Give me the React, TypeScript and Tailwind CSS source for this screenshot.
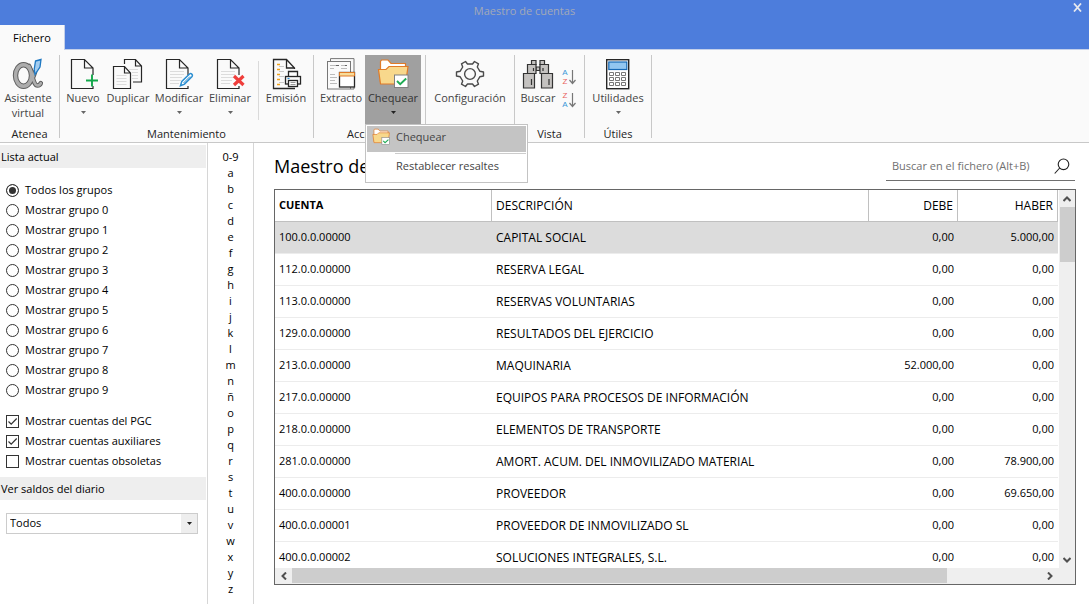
import { useState, type ReactNode } from "react";

const groups = [
  "Todos los grupos",
  ...Array.from({ length: 10 }, (_, i) => `Mostrar grupo ${i}`),
];

const initialOptions = [
  { label: "Mostrar cuentas del PGC", on: true },
  { label: "Mostrar cuentas auxiliares", on: true },
  { label: "Mostrar cuentas obsoletas", on: false },
];

const letters = ["0-9", ..."abcdefghijklmnñopqrstuvwxyz"];

const rows = [
  ["100.0.0.00000", "CAPITAL SOCIAL", "0,00", "5.000,00"],
  ["112.0.0.00000", "RESERVA LEGAL", "0,00", "0,00"],
  ["113.0.0.00000", "RESERVAS VOLUNTARIAS", "0,00", "0,00"],
  ["129.0.0.00000", "RESULTADOS DEL EJERCICIO", "0,00", "0,00"],
  ["213.0.0.00000", "MAQUINARIA", "52.000,00", "0,00"],
  ["217.0.0.00000", "EQUIPOS PARA PROCESOS DE INFORMACIÓN", "0,00", "0,00"],
  ["218.0.0.00000", "ELEMENTOS DE TRANSPORTE", "0,00", "0,00"],
  ["281.0.0.00000", "AMORT. ACUM. DEL INMOVILIZADO MATERIAL", "0,00", "78.900,00"],
  ["400.0.0.00000", "PROVEEDOR", "0,00", "69.650,00"],
  ["400.0.0.00001", "PROVEEDOR DE INMOVILIZADO SL", "0,00", "0,00"],
  ["400.0.0.00002", "SOLUCIONES INTEGRALES, S.L.", "0,00", "0,00"],
];

function Icon({ children }: { children: ReactNode }) {
  return (
    <svg viewBox="0 0 32 32" className="size-8 shrink-0" fill="none" aria-hidden="true">
      {children}
    </svg>
  );
}

function AssistantIcon() {
  const ribbon = "M17 8c3 5 4 19.500 8.500 19.500 2 0 2.800-1 3.300-2.300M23 14c-1.500 5-4 10-7 12.500";
  return (
    <Icon>
      <g strokeLinecap="round">
        <ellipse cx="11.500" cy="17.500" rx="8" ry="10.800" stroke="#5f5f5f" strokeWidth="5.400" />
        <path d={ribbon} stroke="#5f5f5f" strokeWidth="4.600" />
        <ellipse cx="11.500" cy="17.500" rx="8" ry="10.800" stroke="#adadad" strokeWidth="3.400" />
        <path d={ribbon} stroke="#adadad" strokeWidth="2.600" />
      </g>
      <path d="M23.500 3 29 1.500l-1 7.500-5 7.500-.8-5Z" fill="#a3cdf0" stroke="#1e78c2" strokeWidth="1.300" />
    </Icon>
  );
}

function Page() {
  return <path d="M25 17V10L16.500 1.500H3.500v29H25V28M16.500 1.500V10H25" stroke="#262626" strokeWidth="1.200" />;
}

function PageLines() {
  return <path d="M7 13.500h14M7 16.500h14M7 19.500h12M7 22.500h11M7 25.500h9" stroke="#dcdcdc" />;
}

function NewIcon() {
  return (
    <Icon>
      <path d="M26 17V10L17.500 1.500H4.500v29H26V28M17.500 1.500V10H26" stroke="#262626" strokeWidth="1.200" />
      <path d="M19 22.500h12M25 16.500v12" stroke="#12a84b" strokeWidth="1.900" />
    </Icon>
  );
}

function DuplicateIcon() {
  return (
    <Icon>
      <path d="M12.500 6V1.500h11L29.500 8v16H21M23.500 1.500V8h6" stroke="#262626" strokeWidth="1.200" />
      <path d="M17 11.500h9M20 14.500h6M20 17.500h6M20 20.500h6" stroke="#dcdcdc" />
      <path d="M1.500 8.500h11l6 6.500v15.500h-17ZM12.500 8.500V15h6" stroke="#262626" strokeWidth="1.200" />
      <path d="M4.500 17.500h10M4.500 20.500h10M4.500 23.500h10M4.500 26.500h10" stroke="#dcdcdc" />
    </Icon>
  );
}

function EditIcon() {
  return (
    <Icon>
      <Page />
      <PageLines />
      <path
        d="m17.500 27.700 1.300-4.300 7.700-7.400c1.500-1.200 3.800.8 2.600 2.500l-7.600 7.600-4 1.600Z"
        fill="#fff"
        stroke="#2a8dd0"
        strokeWidth="1.500"
      />
      <path d="m20.500 25 6.500-6.500" stroke="#2a8dd0" />
    </Icon>
  );
}

function DeleteIcon() {
  return (
    <Icon>
      <Page />
      <PageLines />
      <path d="m20 18 9.500 9M29.500 18 20 27" stroke="#ef3e3b" strokeWidth="3.200" />
    </Icon>
  );
}

function PrintIcon() {
  return (
    <Icon>
      <path d="M24.500 11V10L16.500 1.500h-13v29H25M16.500 1.500V10h8" stroke="#262626" strokeWidth="1.300" />
      <path d="M7 6.500h3M7 11.500h3M7 16.500h3M7 21.500h3M7 26.500h3" stroke="#f0a21c" strokeWidth="1.500" />
      <path d="M9 8.500h5M9 13.500h5M9 18.500h5M9 24.500h5" stroke="#c8c8c8" />
      <path d="M18.500 18.500v-5h9v5" fill="#fff" stroke="#262626" strokeWidth="1.300" />
      <rect x="15.500" y="18.500" width="15" height="7.500" fill="#fafafa" stroke="#262626" strokeWidth="1.300" />
      <rect x="18.500" y="22.500" width="9" height="6" fill="#fff" stroke="#262626" strokeWidth="1.300" />
      <path d="M20.500 24.500h5M20.500 26.500h5" stroke="#999" />
      <path d="M17.500 20.500h2" stroke="#2a8dd0" strokeWidth="1.200" />
    </Icon>
  );
}

function StatementIcon() {
  return (
    <Icon>
      <path d="M5.500 3V.6h23.500V14M29 29v2h-3" stroke="#777" />
      <rect x="2.500" y="3.500" width="23" height="27.500" fill="#fafafa" stroke="#777" />
      <path d="M5 7.500h8M16 7.500h6M5 10.500h4M16 10.500h6M5 16.500h5M5 19.500h7M5 22.500h5M5 25.500h7" stroke="#bbb" />
      <path d="M11 7.500h3M20 7.500h2" stroke="#666" />
      <rect x="14.500" y="14.500" width="15" height="14.500" fill="#fff" stroke="#262626" strokeWidth="1.300" />
      <path d="M14.500 14.500h15v3.500h-15Z" fill="#f8dc9a" stroke="#e07b28" />
    </Icon>
  );
}

function FolderCheckArt() {
  return (
    <>
      <path d="M3.500 24V3.500l1-1.500H11l3 3.500h14.500V12" fill="#fff" stroke="#e07b28" strokeWidth="1.200" />
      <path d="M3.500 26 1.500 11.500h7.500l3-3H31L28.500 26Z" fill="#f8d88c" stroke="#e07b28" strokeWidth="1.200" />
      <rect x="17.500" y="17" width="13.500" height="12.500" fill="#fff" stroke="#808080" />
      <path d="m20 23 3.200 3.200 6-5.700" stroke="#1fab54" strokeWidth="1.900" />
    </>
  );
}

function GearIcon() {
  return (
    <Icon>
      <path
        d="M11.500 3.500 13.500 6h5l2-2.500 4 2.300-1.200 3.200 2.500 4.200 3.700.8v4l-3.700.8-2.500 4.200 1.200 3.200-4 2.300-2-2.500h-5l-2 2.500-4-2.300 1.200-3.200-2.500-4.200-3.700-.8v-4l3.700-.8L8.700 9 7.500 5.800Z"
        stroke="#4a4a4a"
        strokeWidth="1.400"
        strokeLinejoin="round"
      />
      <circle cx="16" cy="16" r="5.400" stroke="#4a4a4a" strokeWidth="1.400" />
    </Icon>
  );
}

function BinocularsIcon() {
  return (
    <Icon>
      <g fill="#c4c2c0" stroke="#333" strokeWidth="1.200">
        <path d="M9.500 2.500h4.500v4H9.500ZM18 2.500h4.500v4H18ZM14 9h4v3.500h-4Z" />
        <path d="M5.500 6.500H14v9H5.500ZM18 6.500h8.500v9H18Z" />
        <path d="M1.500 15.500h11v14.500h-11ZM19.500 15.500h11v14.500h-11Z" />
      </g>
      <path d="M11.500 10v3M21 10v3M9.500 21v6M27 21v6" stroke="#333" strokeWidth="1.200" />
    </Icon>
  );
}

function CalculatorIcon() {
  return (
    <Icon>
      <rect x="4.700" y="1.700" width="22" height="29" fill="#fff" stroke="#262626" strokeWidth="1.400" />
      <rect x="6.800" y="4" width="18" height="7.500" fill="#92c6f0" stroke="#1769b5" strokeWidth="1.200" />
      <path
        d="M7.500 14.500h4v3h-4ZM13.500 14.500h4v3h-4ZM19.500 14.500h4v3h-4ZM7.500 19.500h4v3h-4ZM13.500 19.500h4v3h-4ZM19.500 19.500h4v3h-4ZM7.500 24.500h4v3h-4ZM13.500 24.500h4v3h-4ZM19.500 24.500h4v3h-4Z"
        fill="#fff"
        stroke="#777"
      />
    </Icon>
  );
}

function SortIcon({ top, bottom, topFill, bottomFill }: { top: string; bottom: string; topFill: string; bottomFill: string }) {
  return (
    <svg viewBox="0 0 16 20" className="h-5 w-4" fill="none" aria-hidden="true">
      <g fontFamily="Liberation Sans, sans-serif" fontSize="8" textAnchor="middle">
        <text x="4" y="8" fill={topFill}>{top}</text>
        <text x="4" y="17" fill={bottomFill}>{bottom}</text>
      </g>
      <path d="M11.500 3v13.500M8.500 13l3 3.500 3-3.500" stroke="#777" strokeWidth="1.200" />
    </svg>
  );
}

function Caret({ dark = false }: { dark?: boolean }) {
  return (
    <svg viewBox="0 0 5 3" className={`h-[3px] w-[5px] ${dark ? "text-[#222]" : "text-[#666]"}`} aria-hidden="true">
      <path d="M0 0h5L2.500 3Z" fill="currentColor" />
    </svg>
  );
}

function Tool({
  icon,
  label,
  second,
  menu,
  className,
  onClick,
  expanded,
}: {
  icon: ReactNode;
  label: string;
  second?: string;
  menu?: boolean;
  className: string;
  onClick?: () => void;
  expanded?: boolean;
}) {
  return (
    <button
      type="button"
      onClick={onClick}
      aria-expanded={expanded}
      className={`flex h-[69px] flex-col items-center whitespace-nowrap pt-[3px] leading-[15px] ${className}`}
    >
      {icon}
      <span>{label}</span>
      {second && <span>{second}</span>}
      {menu && (
        <span className="flex h-[15px] items-center">
          <Caret dark={expanded} />
        </span>
      )}
    </button>
  );
}

function Group({ label, className, children }: { label?: string; className: string; children: ReactNode }) {
  return (
    <section className={`mb-1 mt-[5px] flex flex-col border-r border-[#c8c8c8] ${className}`}>
      <div className="flex flex-1">{children}</div>
      <h2 className="h-3.5 text-center leading-5 text-[#222]">{label}</h2>
    </section>
  );
}

function Chevron({ d }: { d: string }) {
  return (
    <svg viewBox="0 0 8 8" className="size-2" fill="none" aria-hidden="true">
      <path d={d} stroke="#505050" strokeWidth="2" />
    </svg>
  );
}

export default function App() {
  const [open, setOpen] = useState(true);
  const [group, setGroup] = useState(0);
  const [options, setOptions] = useState(initialOptions);
  const [selected, setSelected] = useState(0);

  return (
    <div className="flex h-screen flex-col overflow-hidden bg-white font-['Open_Sans','Noto_Sans',sans-serif] text-[11px] text-black">
      <header className="bg-[#4d7ddc]">
        <div className="flex h-[25px] items-start">
          <h1 className="flex-1 pt-[3px] text-center text-[11px] leading-4 text-[#a2a9b8]">Maestro de cuentas</h1>
          <button type="button" aria-label="Cerrar" className="flex w-10 justify-end pr-[7px] pt-[3px]">
            <svg viewBox="0 0 9 9" className="size-[9px]" fill="none" aria-hidden="true">
              <path d="m1 .5 7 8M8 .5l-7 8" stroke="#e6e8ee" strokeWidth="1.800" />
            </svg>
          </button>
        </div>
        <nav className="flex h-[25px] items-stretch border-b border-[#c4d0ea]">
          <a href="#fichero" className="-mb-px flex w-[65px] items-center justify-center border-r border-[#c4d0ea] bg-[#fafafa] leading-4">
            Fichero
          </a>
        </nav>
      </header>

      <div className="flex h-[93px] border-b border-[#c8c8c8] bg-[#fafafa] text-[#444]">
        <Group label="Atenea" className="w-[60px]">
          <Tool icon={<AssistantIcon />} label="Asistente" second="virtual" className="w-14" />
        </Group>
        <Group label="Mantenimiento" className="w-[254px]">
          <Tool icon={<NewIcon />} label="Nuevo" menu className="ml-px w-11" />
          <Tool icon={<DuplicateIcon />} label="Duplicar" className="w-[46px]" />
          <Tool icon={<EditIcon />} label="Modificar" menu className="w-14" />
          <Tool icon={<DeleteIcon />} label="Eliminar" menu className="w-[46px]" />
          <span className="mx-[5px] mt-1.5 h-[59px] w-px bg-[#dadada]" />
          <Tool icon={<PrintIcon />} label="Emisión" className="w-11" />
        </Group>
        <Group label="Acciones" className="w-[112px]">
          <Tool icon={<StatementIcon />} label="Extracto" className="ml-[3px] w-12" />
          <div className="relative">
            <Tool
              icon={<Icon><FolderCheckArt /></Icon>}
              label="Chequear"
              menu
              expanded={open}
              onClick={() => setOpen(!open)}
              className="w-14 bg-[#a0a0a0] text-[#333]"
            />
            {open && (
              <div role="menu" className="absolute left-0 top-full z-10 w-[163px] border border-[#c3c3c3] bg-white p-px">
                <button type="button" role="menuitem" className="flex h-[26px] w-full items-center gap-[6px] bg-[#c4c4c4] pb-1 pl-[5px] leading-4">
                  <svg viewBox="0 0 32 32" className="size-[18px]" fill="none" aria-hidden="true">
                    <FolderCheckArt />
                  </svg>
                  Chequear
                </button>
                <div className="ml-7 mt-px h-px bg-[#ccc]" />
                <button type="button" role="menuitem" className="flex h-[27px] w-full items-center whitespace-nowrap pb-1 pl-[29px] leading-4">
                  Restablecer resaltes
                </button>
              </div>
            )}
          </div>
        </Group>
        <Group className="w-[89px]">
          <Tool icon={<GearIcon />} label="Configuración" className="w-full" />
        </Group>
        <Group label="Vista" className="w-[70px]">
          <Tool icon={<BinocularsIcon />} label="Buscar" className="ml-0.5 w-[42px]" />
          <div className="flex flex-col gap-[3px] pl-0.5 pt-3">
            <button type="button" aria-label="Orden ascendente">
              <SortIcon top="A" bottom="Z" topFill="#3b97d8" bottomFill="#e8605f" />
            </button>
            <button type="button" aria-label="Orden descendente">
              <SortIcon top="Z" bottom="A" topFill="#e8605f" bottomFill="#3b97d8" />
            </button>
          </div>
        </Group>
        <Group label="Útiles" className="w-[67px]">
          <Tool icon={<CalculatorIcon />} label="Utilidades" menu className="w-full" />
        </Group>
      </div>

      <div className="flex min-h-0 flex-1">
        <aside className="w-[208px] shrink-0 border-r border-[#d6d6d6] pr-px pt-0.5">
          <h2 className="h-[23px] bg-[#eee] pl-px leading-[23px]">Lista actual</h2>
          <div className="pb-[11px] pl-[6px] pt-3">
            {groups.map((name, i) => (
              <label key={name} className="flex h-5 items-center gap-[6px]">
                <input
                  type="radio"
                  name="grupo"
                  checked={group === i}
                  onChange={() => setGroup(i)}
                  className="size-[13px] appearance-none rounded-full border border-[#333] bg-white checked:bg-[#333] checked:shadow-[inset_0_0_0_2px_white]"
                />
                {name}
              </label>
            ))}
          </div>
          <div className="pb-[6px] pl-[6px]">
            {options.map((option, i) => (
              <label key={option.label} className="flex h-5 items-center gap-[6px]">
                <span className="grid">
                  <input
                    type="checkbox"
                    checked={option.on}
                    onChange={() => setOptions(options.map((o, j) => (j === i ? { ...o, on: !o.on } : o)))}
                    className="col-start-1 row-start-1 size-[13px] appearance-none border border-[#333] bg-white"
                  />
                  {option.on && (
                    <svg viewBox="0 0 13 13" className="pointer-events-none col-start-1 row-start-1 size-[13px]" fill="none" aria-hidden="true">
                      <path d="m2.500 6.500 2.700 2.700 5.500-5.700" stroke="#333" strokeWidth="1.200" />
                    </svg>
                  )}
                </span>
                {option.label}
              </label>
            ))}
          </div>
          <h2 className="h-[23px] bg-[#eee] pl-px leading-[23px]">
            <label htmlFor="saldos">Ver saldos del diario</label>
          </h2>
          <div className="ml-[6px] mr-2 mt-[13px] grid h-[21px] border border-[#ccc]">
            <select id="saldos" className="col-start-1 row-start-1 appearance-none pl-[3px]">
              <option>Todos</option>
            </select>
            <span className="pointer-events-none col-start-1 row-start-1 flex w-4 items-center justify-center justify-self-end bg-[#eee]">
              <Caret dark />
            </span>
          </div>
        </aside>

        <nav className="flex w-[46px] shrink-0 flex-col items-center border-r border-[#d6d6d6] pt-[6px]">
          {letters.map((letter) => (
            <button key={letter} type="button" className="h-4 leading-4">
              {letter}
            </button>
          ))}
        </nav>

        <main className="flex min-w-0 flex-1 flex-col pb-[19px] pl-5 pr-[13px]">
          <div className="flex h-[46px] items-start justify-between">
            <h2 className="pt-[11px] text-lg leading-6">Maestro de cuentas</h2>
            <label className="mr-px mt-[9px] flex h-[29px] w-[189px] items-center border-b border-[#707070] pl-[6px] pr-[5px]">
              <input
                type="search"
                aria-label="Buscar en el fichero"
                placeholder="Buscar en el fichero (Alt+B)"
                className="min-w-0 flex-1 outline-none placeholder:text-[#707070]"
              />
              <svg viewBox="0 0 16 16" className="size-4" fill="none" aria-hidden="true">
                <circle cx="9.500" cy="6.300" r="5.300" stroke="#222" strokeWidth="1.100" />
                <path d="m5.700 10-5 5.500" stroke="#222" strokeWidth="1.100" />
              </svg>
            </label>
          </div>

          <div className="flex min-h-0 flex-1 flex-col border border-[#666]">
            <div className="flex min-h-0 flex-1">
              <div className="min-w-0 flex-1 overflow-hidden">
                <table className="w-full table-fixed border-separate border-spacing-0 text-[11px]">
                  <colgroup>
                    <col className="w-[217px]" />
                    <col />
                    <col className="w-[89px]" />
                    <col className="w-[100px]" />
                  </colgroup>
                  <thead>
                    <tr className="h-8 [&>th]:border-b [&>th]:border-r [&>th]:border-[#c0c0c0] [&>th]:px-1">
                      <th scope="col" className="text-left font-bold">CUENTA</th>
                      <th scope="col" className="text-left text-xs font-normal">DESCRIPCIÓN</th>
                      <th scope="col" className="text-right text-xs font-normal">DEBE</th>
                      <th scope="col" className="text-right text-xs font-normal">HABER</th>
                    </tr>
                  </thead>
                  <tbody>
                    {rows.map((row, i) => (
                      <tr
                        key={row[0]}
                        onClick={() => setSelected(i)}
                        className={`h-8 [&>td]:border-b [&>td]:border-[#ececec] [&>td]:px-1 ${selected === i ? "bg-[#dcdcdc]" : ""}`}
                      >
                        <td>{row[0]}</td>
                        <td className="text-xs">{row[1]}</td>
                        <td className="text-right">{row[2]}</td>
                        <td className="text-right">{row[3]}</td>
                      </tr>
                    ))}
                  </tbody>
                </table>
              </div>
              <div className="ml-px flex w-4 flex-col items-center bg-[#efefef]">
                <button type="button" aria-label="Subir" className="flex h-[17px] items-center">
                  <Chevron d="m.5 6 3.500-3.500L7.500 6" />
                </button>
                <span className="h-[55px] w-[15px] bg-[#cdcdcd]" />
                <span className="flex-1" />
                <button type="button" aria-label="Bajar" className="flex h-[17px] items-center">
                  <Chevron d="M.5 2 4 5.500 7.500 2" />
                </button>
              </div>
            </div>
            <div className="flex h-4 items-center bg-[#efefef] pr-[17px]">
              <button type="button" aria-label="Izquierda" className="flex h-4 w-[17px] items-center justify-center">
                <Chevron d="M6 .5 2.500 4 6 7.500" />
              </button>
              <div className="flex h-full flex-1">
                <span className="h-[15px] w-7/8 bg-[#cdcdcd]" />
              </div>
              <button type="button" aria-label="Derecha" className="flex h-4 w-[17px] items-center justify-center">
                <Chevron d="M2 .5 5.500 4 2 7.500" />
              </button>
            </div>
          </div>
        </main>
      </div>
    </div>
  );
}
